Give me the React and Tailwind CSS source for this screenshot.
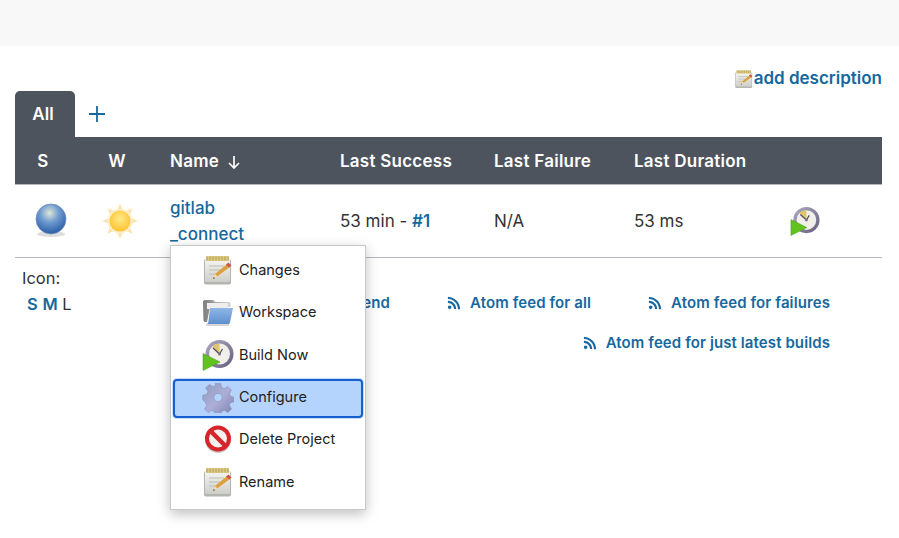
import React from "react";
import { FaRss } from "react-icons/fa";

const NoteIcon = ({ className }) => (
  <svg viewBox="0 0 32 32" className={className}>
    <defs>
      <linearGradient id="notePage" x1="0" y1="0" x2="0" y2="1">
        <stop offset="0" stopColor="#f6f6f2" />
        <stop offset="1" stopColor="#cfcfca" />
      </linearGradient>
    </defs>
    <rect x="2" y="5" width="27" height="25.500" rx="2" fill="#b4b4b1" />
    <rect x="3" y="4" width="25" height="24" rx="1.500" fill="url(#notePage)" />
    <rect x="4" y="2" width="23" height="5" rx="1" fill="#dccb86" />
    <path d="M5 2.500v4M8 2.500v4M11 2.500v4M14 2.500v4M17 2.500v4M20 2.500v4M23 2.500v4M26 2.500v4" stroke="#a8923f" strokeWidth="0.800" />
    <path d="M7 12h15M7 16h11M7 20h7" stroke="#bdbdb8" strokeWidth="1.100" />
    <path d="M11 25l2-5L25 10l3 3-13 9.500z" fill="#dda040" />
    <path d="M24 10.500l2.500-2 3 3-2.300 2z" fill="#cf5546" />
    <path d="M11 25l2-5 2.500 2.500z" fill="#f0dfbc" />
    <path d="M11 25l.8-2 1.200 1.200z" fill="#444" />
  </svg>
);

const FolderIcon = ({ className }) => (
  <svg viewBox="0 0 32 32" className={className}>
    <defs>
      <linearGradient id="folderBack" x1="0" y1="0" x2="1" y2="0">
        <stop offset="0" stopColor="#7d7d7d" />
        <stop offset="1" stopColor="#d6d6d6" />
      </linearGradient>
      <linearGradient id="folderFront" x1="0" y1="0" x2="0" y2="1">
        <stop offset="0" stopColor="#8fb7e8" />
        <stop offset="1" stopColor="#5f8fcc" />
      </linearGradient>
    </defs>
    <path d="M1 6c0-1 .7-2 2-2h8l2 2h14c1 0 1.500.7 1.500 2v3H8L5 26H3c-1 0-1.500-.8-1.500-2z" fill="url(#folderBack)" />
    <path d="M5 7h21v6H5z" fill="#eeeeee" />
    <path d="M8 12h23l-3 14.500c-.2.800-.7 1.500-1.700 1.500H4.500C6 28 6.500 26 6.500 25z" fill="url(#folderFront)" />
    <path d="M4 29h23" stroke="#c9c9c9" strokeWidth="1.500" />
  </svg>
);

const ClockIcon = ({ className }) => (
  <svg viewBox="0 0 32 32" className={className}>
    <defs>
      <linearGradient id="clockRing" x1="0" y1="0" x2="1" y2="1">
        <stop offset="0" stopColor="#b2abc6" />
        <stop offset="1" stopColor="#635c7c" />
      </linearGradient>
    </defs>
    <circle cx="17.500" cy="15" r="14" fill="url(#clockRing)" />
    <circle cx="17.500" cy="15" r="10.500" fill="#f1efe9" />
    <path d="M17.500 15L10 7.500c2-2 4.500-3 7.500-3z" fill="#e0c56e" />
    <path d="M17.500 15L11 9M17.500 15l3-5" stroke="#55505f" strokeWidth="1.300" />
    <circle cx="17.500" cy="15" r="1.500" fill="#77728a" />
    <path d="M1 14.500L18 23 1 31.500z" fill="#62c21e" stroke="#3f9a12" strokeWidth="0.500" />
  </svg>
);

const GearIcon = ({ className }) => (
  <svg viewBox="0 0 32 32" className={className}>
    <defs>
      <linearGradient id="gearFill" x1="0" y1="0" x2="1" y2="1">
        <stop offset="0" stopColor="#8d9bbd" />
        <stop offset="0.5" stopColor="#aeaed8" />
        <stop offset="1" stopColor="#7780aa" />
      </linearGradient>
    </defs>
    <path
      fillRule="evenodd"
      fill="url(#gearFill)"
      stroke="#7a83a0"
      strokeWidth="0.500"
      d="M13 1h6l1 4.500 3 1.300 4-2.500 4 4-2.500 4 1.300 3 4.500 1v5l-4.500 1-1.300 3 2.500 4-4 4-4-2.500-3 1.300-1 4.500h-6l-1-4.500-3-1.300-4 2.500-4-4 2.500-4-1.300-3L-1 19v-5l4.500-1 1.300-3-2.500-4 4-4 4 2.500 3-1.300zM16 12a4.500 4.500 0 1 0 .01 0z"
      transform="translate(1.600 1.600) scale(0.9)"
    />
  </svg>
);

const DeleteIcon = ({ className }) => (
  <svg viewBox="0 0 32 32" className={className}>
    <circle cx="16" cy="17" r="13" fill="#c9c9c9" />
    <circle cx="16" cy="15.500" r="11" fill="#f6f0ee" stroke="#d7262b" strokeWidth="4" />
    <path d="M8.500 8L23.500 23" stroke="#d7262b" strokeWidth="4.500" />
  </svg>
);

const SunIcon = () => (
  <svg viewBox="0 0 38 38" className="w-[38px] h-[38px]">
    <defs>
      <radialGradient id="sunCore" cx="0.5" cy="0.4" r="0.6">
        <stop offset="0" stopColor="#ffe98a" />
        <stop offset="1" stopColor="#fdc32f" />
      </radialGradient>
    </defs>
    {[0, 45, 90, 135, 180, 225, 270, 315].map((angle) => (
      <path key={angle} d="M19 1l4.500 11h-9z" fill="#fde3b0" transform={`rotate(${angle} 19 19)`} />
    ))}
    <circle cx="19" cy="19" r="12.500" fill="#fdeec8" />
    <circle cx="19" cy="19" r="10.500" fill="url(#sunCore)" />
  </svg>
);

const BallIcon = () => (
  <svg viewBox="0 0 34 36" className="w-[34px] h-[36px]">
    <defs>
      <radialGradient id="ballFill" cx="0.45" cy="0.3" r="0.7">
        <stop offset="0" stopColor="#dfe6d8" />
        <stop offset="0.45" stopColor="#6f9bd0" />
        <stop offset="1" stopColor="#2b5ca6" />
      </radialGradient>
    </defs>
    <ellipse cx="17" cy="31" rx="14" ry="3" fill="#dedede" />
    <circle cx="17" cy="16" r="15" fill="url(#ballFill)" stroke="#6e8cbd" strokeWidth="0.800" />
  </svg>
);

const menuItems = [
  { label: "Changes", Icon: NoteIcon },
  { label: "Workspace", Icon: FolderIcon },
  { label: "Build Now", Icon: ClockIcon },
  { label: "Configure", Icon: GearIcon, active: true },
  { label: "Delete Project", Icon: DeleteIcon },
  { label: "Rename", Icon: NoteIcon },
];

const FeedLink = ({ label }) => (
  <a className="flex items-center gap-[9px] text-[15px] tracking-[0.1px] font-semibold text-[#16689f]">
    <FaRss className="w-[14px] h-[14px]" />
    <span>{label}</span>
  </a>
);

const App = () => {
  return (
    <div className="relative min-h-[538px] bg-white text-[#333] font-['Inter',sans-serif] overflow-hidden">
      <div className="h-[46px] bg-[#f8f8f8]" />

      <div className="pl-[15px] pr-[17px]">
        <div className="flex justify-end items-center h-[45px] pt-[21px]">
          <NoteIcon className="w-[20px] h-[20px]" />
          <a className="text-[17px] font-semibold text-[#16689f]">add description</a>
        </div>

        {/* Tabs */}
        <div className="flex items-center h-[46px]">
          <div className="w-[60px] h-[46px] flex items-center justify-center rounded-t-[5px] bg-[#4d545d] text-white font-semibold text-[17px] pr-[4px] pt-[2px]">
            All
          </div>
          <svg viewBox="0 0 16 16" className="ml-[14px] w-[16px] h-[16px]">
            <path d="M8 0v16M0 8h16" stroke="#16689f" strokeWidth="1.800" />
          </svg>
        </div>

        {/* Job table */}
        <div className="grid grid-cols-[56px_92px_170px_154px_140px_140px_1fr] h-[48px] pt-[2px] items-center bg-[#4d545d] border-b border-[#b4b8bd] text-white text-[17px] tracking-[0.25px] font-semibold">
          <div className="text-center">S</div>
          <div className="text-center">W</div>
          <div className="pl-[7px] flex items-center gap-[8px]">
            Name
            <svg viewBox="0 0 14 14" className="w-[14px] h-[14px]">
              <path d="M7 1v12M2 8l5 5 5-5" stroke="white" strokeWidth="1.700" fill="none" />
            </svg>
          </div>
          <div className="pl-[7px]">Last Success</div>
          <div className="pl-[7px]">Last Failure</div>
          <div className="pl-[7px]">Last Duration</div>
          <div />
        </div>
        <div className="grid grid-cols-[56px_92px_170px_154px_140px_140px_1fr] h-[73px] items-center border-b border-[#b4b8bd] text-[17px]">
          <div className="flex justify-center pl-[15px]"><BallIcon /></div>
          <div className="flex justify-center pl-[6px]"><SunIcon /></div>
          <div className="pl-[7px] w-[90px] leading-[26px] font-medium text-[#16689f]">
            gitlab
            <br />
            _connect
          </div>
          <div className="pl-[7px] pt-[2px]">
            53 min - <a className="font-semibold text-[#16689f]">#1</a>
          </div>
          <div className="pl-[7px] pt-[2px]">N/A</div>
          <div className="pl-[7px] pt-[2px]">53 ms</div>
          <div className="pl-[23px]">
            <ClockIcon className="w-[30px] h-[30px]" />
          </div>
        </div>

        {/* Legend and feeds */}
        <div className="flex justify-between">
          <div className="pl-[7px] pt-[7px] text-[16.500px] leading-[26px]">
            <div>Icon:</div>
            <div className="pl-[5px]">
              <a className="font-semibold text-[#16689f]">S</a>{" "}
              <a className="font-semibold text-[#16689f]">M</a> L
            </div>
          </div>
          <div className="pr-[52px] pt-[25px] flex flex-col items-end">
            <div className="flex items-center h-[40px] gap-[57px]">
              <FeedLink label="Legend" />
              <FeedLink label="Atom feed for all" />
              <FeedLink label="Atom feed for failures" />
            </div>
            <div className="flex items-center h-[40px]">
              <FeedLink label="Atom feed for just latest builds" />
            </div>
          </div>
        </div>
      </div>

      {/* Context menu */}
      <div className="absolute left-[170px] top-[245px] w-[196px] h-[265px] py-[2.500px] bg-white border border-[#c8c8c8] shadow-[0_4px_12px_rgba(0,0,0,0.25)]">
        {menuItems.map(({ label, Icon, active }) => (
          <div
            key={label}
            className={
              active
                ? "flex items-center h-[39px] mt-[3px] mx-[2px] pl-[27px] pb-[3px] gap-[5px] rounded-[4px] bg-[#b4d4fe] border-2 border-[#1560cc] ring-1 ring-[#c5dcfb] text-[14.500px] text-[#222]"
                : "flex items-center h-[42.500px] pl-[31px] gap-[5px] text-[14.500px] text-[#222]"
            }
          >
            <Icon className="w-[32px] h-[32px]" />
            <span>{label}</span>
          </div>
        ))}
      </div>
    </div>
  );
};

export default App;
